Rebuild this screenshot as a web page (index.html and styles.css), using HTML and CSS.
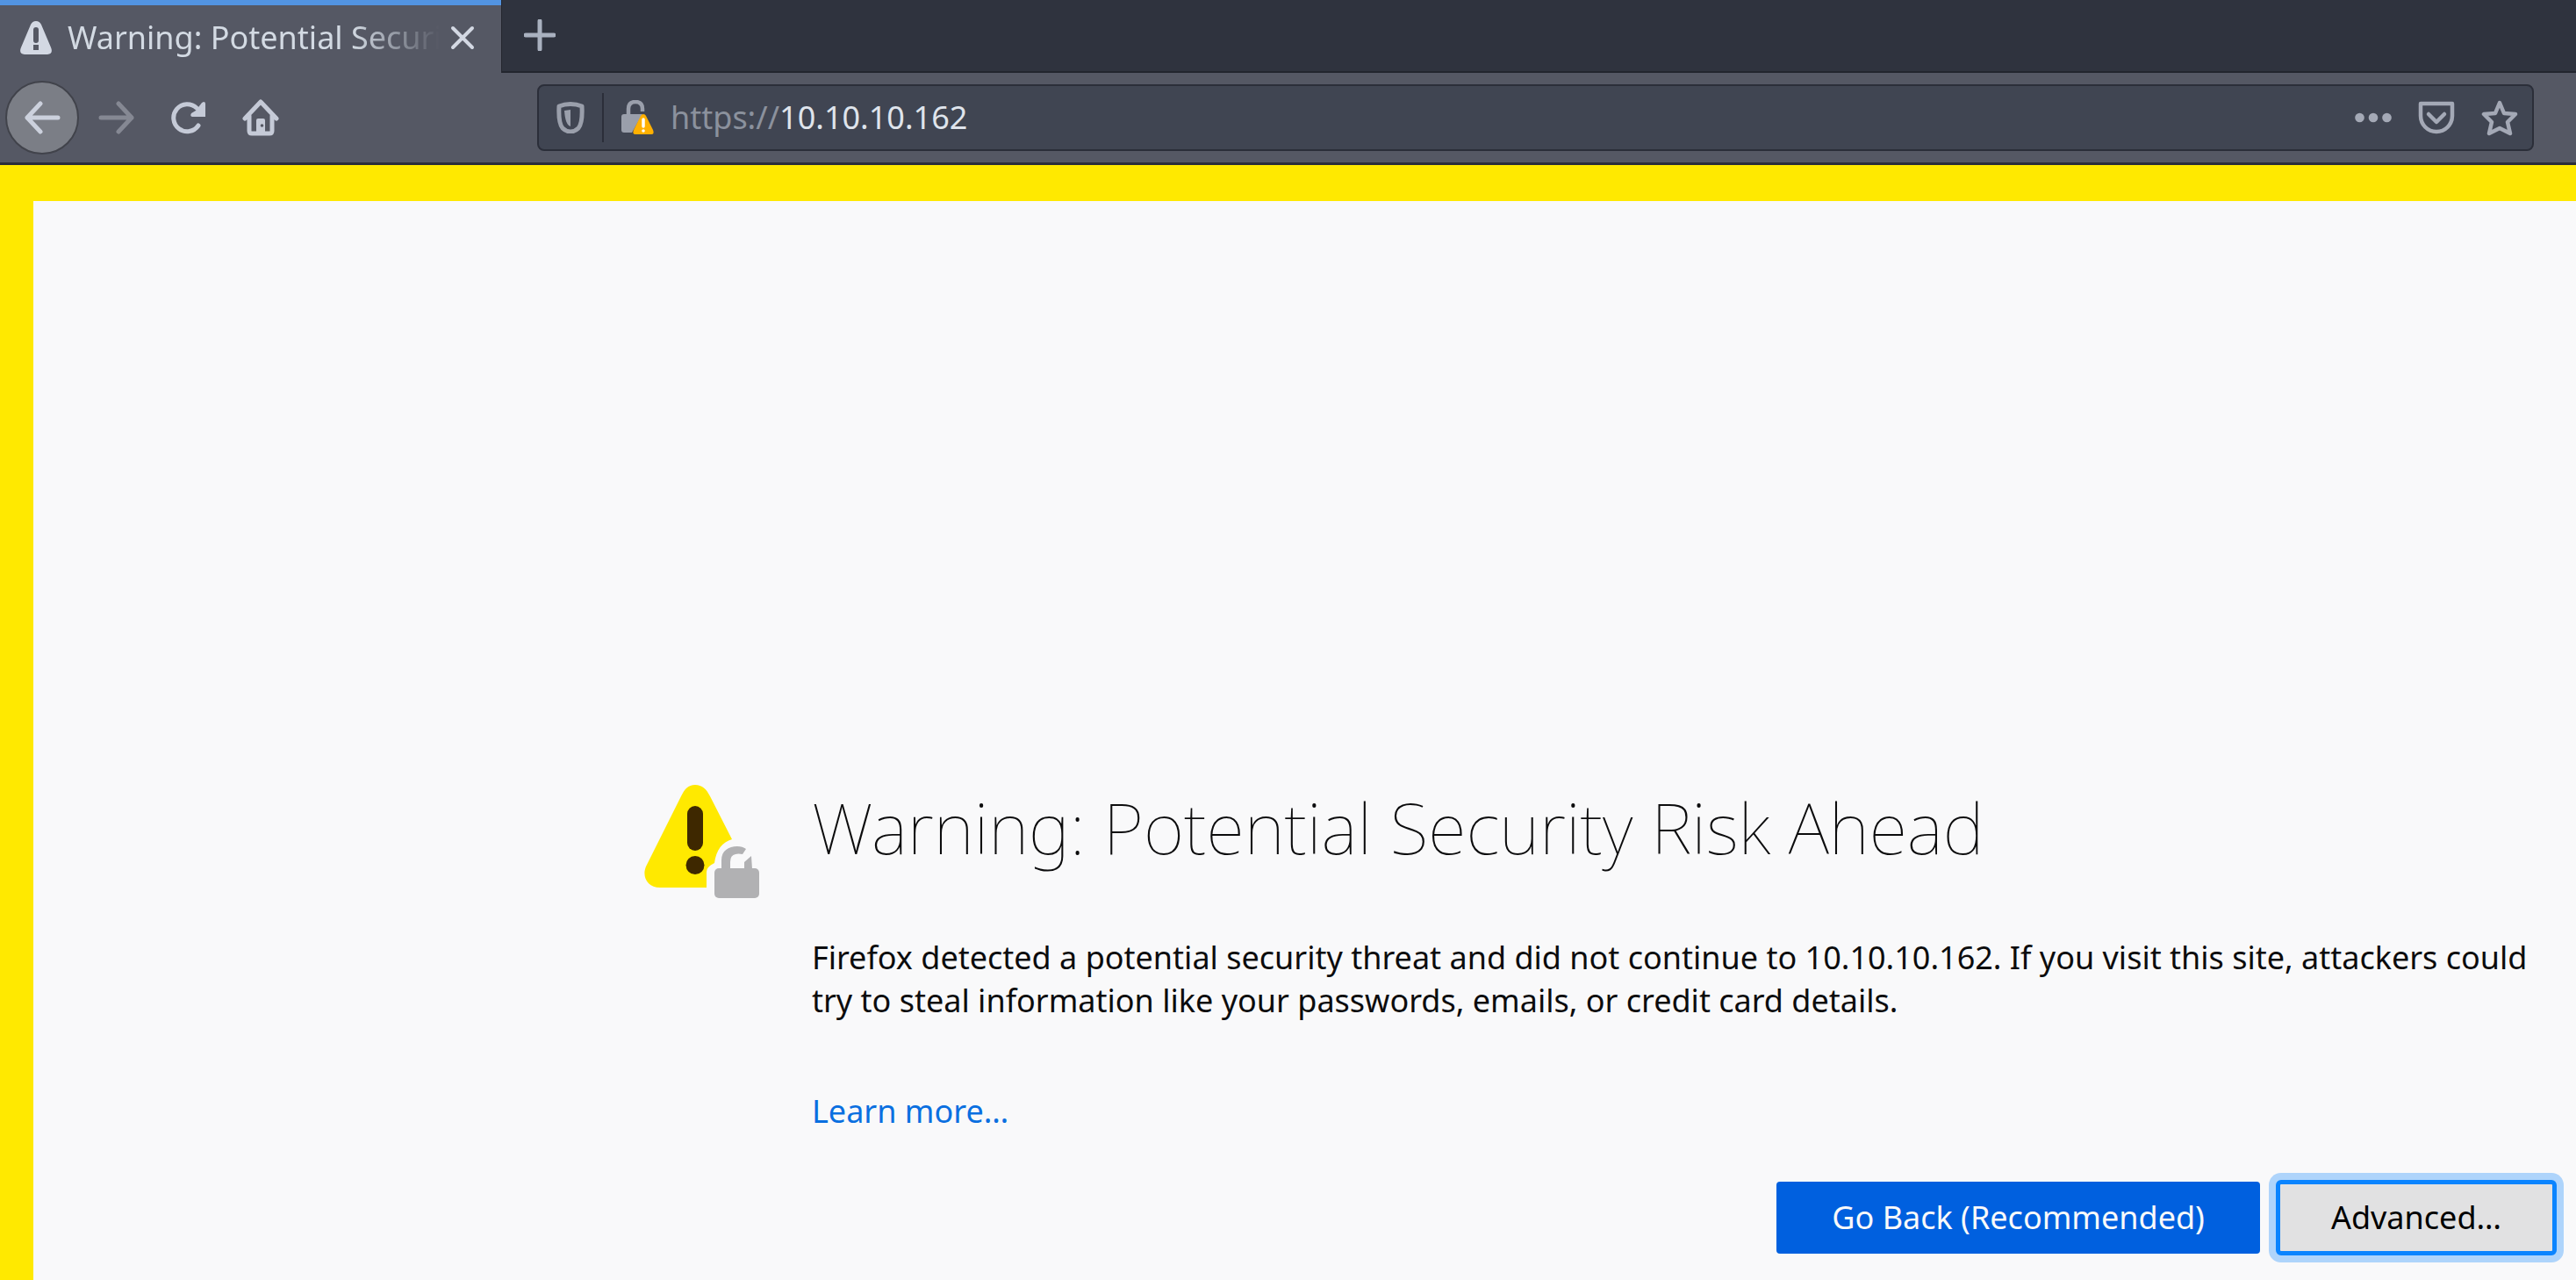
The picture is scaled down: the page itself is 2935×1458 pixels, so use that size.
FILE: index.html
```html
<!DOCTYPE html>
<html lang="en">
<head>
<meta charset="utf-8">
<title>Warning: Potential Security Risk Ahead</title>
<link rel="stylesheet" href="styles.css">
</head>
<body>
<header class="browser">
  <div class="tabs">
    <div class="tab">
      <svg class="tab-icon" viewBox="0 0 36 38" aria-hidden="true"><path fill="#d3d8e3" fill-rule="evenodd" d="M18 0q4 0 6 4l11 26q3 7-4 8H5q-7-1-4-8L12 4q2-4 6-4zm-3 10v12q0 3 3 3t3-3V10q0-3-3-3t-3 3zm0 17v6h6v-6z"/></svg>
      <span class="tab-title">Warning: Potential Security Risk Ahead</span>
      <button class="plain" aria-label="Close tab"><svg width="28" height="28" viewBox="0 0 28 28"><path d="M3 3l22 22M25 3L3 25" stroke="#d3d8e3" stroke-width="4" stroke-linecap="round"/></svg></button>
    </div>
    <button class="plain new-tab" aria-label="New tab"><svg width="36" height="36" viewBox="0 0 36 36"><path d="M18 2v32M2 18h32" stroke="#a9b1bf" stroke-width="5" stroke-linecap="round"/></svg></button>
  </div>
  <div class="toolbar">
    <nav class="nav">
      <button class="plain back" aria-label="Back"><svg width="42" height="38" viewBox="0 0 42 38"><path d="M39 19H4M19 3L4 19l15 16" fill="none" stroke="#ccd1dd" stroke-width="5" stroke-linecap="round" stroke-linejoin="round"/></svg></button>
      <button class="plain" aria-label="Forward" disabled><svg width="42" height="38" viewBox="0 0 42 38"><path d="M3 19h35M23 3l15 16-15 16" fill="none" stroke="#858893" stroke-width="5" stroke-linecap="round" stroke-linejoin="round"/></svg></button>
      <button class="plain" aria-label="Reload"><svg width="42" height="38" viewBox="0 0 42 38"><path d="M32 28A15.500 15.500 0 1 1 30 8" fill="none" stroke="#c5cad7" stroke-width="5" stroke-linecap="round"/><path d="M38 1q2 0 2 2v15H25q-3-1-1-4l5-3 7-9z" fill="#c5cad7"/></svg></button>
      <button class="plain" aria-label="Home"><svg width="42" height="42" viewBox="0 0 42 42"><path d="M3 22L21 3l18 19M8 19v17q0 3 3 3h20q3 0 3-3V19" fill="none" stroke="#c5cad7" stroke-width="5" stroke-linecap="round" stroke-linejoin="round"/><path d="M16 39V24q0-2 2-2h6q2 0 2 2v15z" fill="#c5cad7"/><circle cx="22.500" cy="30" r="1.800" fill="#555864"/></svg></button>
    </nav>
    <div class="url">
      <svg width="32" height="36" viewBox="0 0 32 36" aria-hidden="true"><path d="M16 2.500q7 0 13 2.500 1 19-4 25-4 4-9 4t-9-4Q2 24 3 5q6-2.500 13-2.500z" fill="none" stroke="#9a9fab" stroke-width="5" stroke-linejoin="round"/><path d="M16 9v19q-6-2-7-18z" fill="#9a9fab"/></svg>
      <span class="divider"></span>
      <svg class="lock" width="38" height="40" viewBox="0 0 38 40" aria-hidden="true"><path d="M8 17V10q0-8 8-8t8 8v3" fill="none" stroke="#9a9fab" stroke-width="4.500"/><path d="M3 16h21L12 37H3q-3 0-3-3V19q0-3 3-3z" fill="#9a9fab"/><path d="M25 16q2 0 3 2l8 16q2 5-2 5H16q-4 0-2-5l8-16q1-2 3-2z" fill="#ffb000"/><path d="M25 22v8" stroke="#fff" stroke-width="3.500" stroke-linecap="round"/><circle cx="25" cy="35" r="1.800" fill="#fff"/></svg>
      <label for="address">https://</label><input id="address" type="text" value="10.10.10.162">
      <div class="actions">
        <button class="plain" aria-label="Page actions"><svg width="42" height="42" viewBox="0 0 42 42" fill="#a4a9b6"><circle cx="5.500" cy="21" r="5.300"/><circle cx="21" cy="21" r="5.300"/><circle cx="36.500" cy="21" r="5.300"/></svg></button>
        <button class="plain" aria-label="Save to Pocket"><svg width="42" height="42" viewBox="0 0 42 42" fill="none" stroke="#a4a9b6" stroke-width="4.500" stroke-linecap="round" stroke-linejoin="round"><path d="M3 5h36v14a18 18 0 0 1-36 0z"/><path d="M12 17l9 9 9-9"/></svg></button>
        <button class="plain" aria-label="Bookmark this page"><svg width="42" height="42" viewBox="0 0 42 42"><path d="M21 4l5 12 13 1-9 9 3 13-12-6-12 6 3-13-9-9 13-1z" fill="none" stroke="#a4a9b6" stroke-width="4.500" stroke-linejoin="round"/></svg></button>
      </div>
    </div>
  </div>
</header>
<main class="page">
  <div class="notice">
    <svg class="warning" viewBox="0 0 131 129" aria-hidden="true">
      <path fill="#ffe900" d="M58 0C66 0 71 5 75 13L100 62C89 65 82 74 80 89C74 92 71 95 71 100V117H18C4 117-3 105 2 93L42 13C46 5 50 0 58 0Z"/>
      <rect x="49" y="24" width="18" height="51" rx="9" fill="#3e2800"/>
      <circle cx="58" cy="91.500" r="10.500" fill="#3e2800"/>
      <rect x="80" y="95" width="51" height="34" rx="5" fill="#b1b1b3"/>
      <path d="M88 96V86C88 75 96 70 106 70Q112 70 116 73L112 79Q107 78 104 79Q98 80 98 88V96ZM114 96V88L122 81L123 96Z" fill="#b1b1b3"/>
    </svg>
    <section class="message">
      <h1>Warning: Potential Security Risk Ahead</h1>
      <p>Firefox detected a potential security threat and did not continue to 10.10.10.162. If you visit this site, attackers could try to steal information like your passwords, emails, or credit card details.</p>
      <a href="#more">Learn more…</a>
      <div class="buttons">
        <button class="primary">Go Back (Recommended)</button>
        <button class="advanced">Advanced…</button>
      </div>
    </section>
  </div>
</main>
</body>
</html>
```
FILE: styles.css
```css
* { box-sizing: border-box; }

body {
  margin: 0;
  min-height: 100vh;
  display: flex;
  flex-direction: column;
  overflow: hidden;
  font: 36px/48px "Noto Sans", sans-serif;
  background: #f9f9fa;
}

svg { display: block; flex: none; }
button, input { font: inherit; }

.plain {
  display: flex;
  padding: 0;
  border: 0;
  background: none;
}

.tabs {
  display: flex;
  height: 83px;
  background: #2f333e;
}

.tab {
  display: flex;
  align-items: center;
  width: 571px;
  padding: 0 30px 4px 23px;
  border-top: 6px solid #5294e2;
  background: #555864;
  color: #d3dae3;
}

.tab-icon { width: 36px; height: 38px; margin-right: 18px; }

.tab-title {
  flex: 1;
  overflow: hidden;
  white-space: nowrap;
  margin-right: 12px;
  mask-image: linear-gradient(to right, #000 calc(100% - 100px), transparent);
}

.new-tab {
  flex: 1;
  padding: 22px 25px;
  border-bottom: 2px solid #23252e;
  border-left: 1px solid #23252e;
}

.toolbar {
  display: flex;
  align-items: center;
  height: 105px;
  padding: 0 48px 0 6px;
  border-bottom: 3px solid #2b2e39;
  background: #555864;
}

.nav {
  display: flex;
  align-items: center;
  gap: 40px;
  width: 606px;
}

.back {
  align-items: center;
  justify-content: center;
  width: 84px;
  height: 84px;
  margin-right: -18px;
  border: 2px solid #41434b;
  border-radius: 50%;
  background: #7b7e86;
}

.url {
  flex: 1;
  display: flex;
  align-items: center;
  height: 76px;
  padding: 0 16px 0 20px;
  border: 2px solid #2b2e39;
  border-radius: 8px;
  background: #404552;
  color: #8b919d;
}

.divider { width: 2px; height: 56px; margin: 0 20px; background: #2b2e39; }
.lock { margin-right: 18px; }

.url input {
  flex: 1;
  min-width: 0;
  padding: 0;
  border: 0;
  outline: 0;
  background: none;
  color: #dfe4ec;
}

.actions { display: flex; gap: 30px; }

.page {
  flex: 1;
  border: solid #ffe900;
  border-width: 41px 0 0 38px;
}

.notice {
  display: flex;
  gap: 60px;
  padding: 665px 22px 20px 696px;
}

.warning { width: 131px; height: 129px; }
.message { flex: 1; color: #0c0c0d; }

h1 {
  margin: 0 0 76px;
  font-size: 80px;
  line-height: 96px;
  font-weight: 100;
}

p { margin: 0 0 78px; line-height: 49px; }
a { color: #0a6fe0; text-decoration: none; }

.buttons {
  display: flex;
  justify-content: flex-end;
  align-items: center;
  gap: 18px;
  margin-top: 54px;
}

.buttons button {
  height: 82px;
  padding: 0 63px;
  border: 0;
  border-radius: 4px;
}

.buttons .primary { background: #0060df; color: #f9f9fa; }

.buttons .advanced {
  height: 86px;
  padding: 0 58px;
  border: 5px solid #0a84ff;
  border-radius: 6px;
  background: #e1e1e2;
  box-shadow: 0 0 0 8px #0a84ff50;
}
```
